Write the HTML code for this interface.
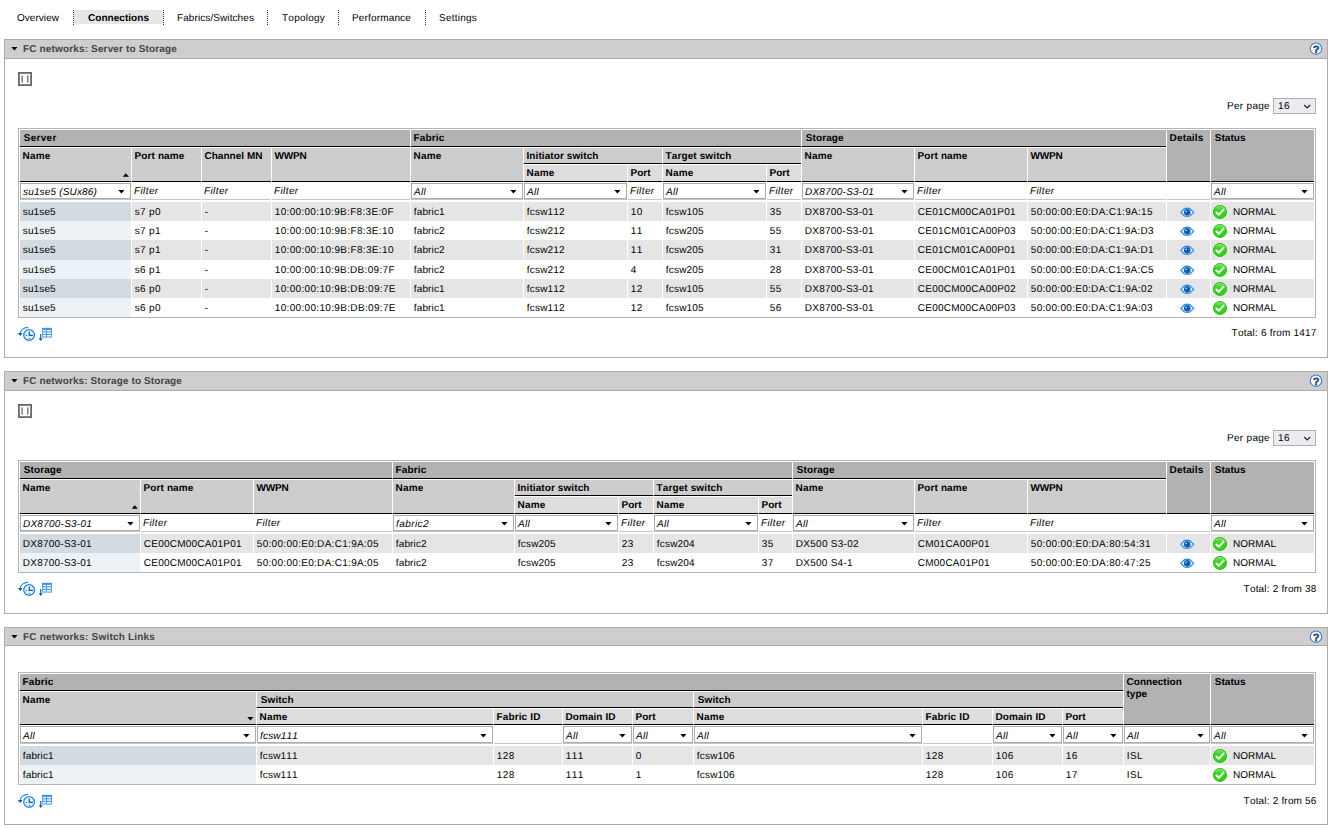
<!DOCTYPE html>
<html><head><meta charset="utf-8"><title>FC networks</title>
<style>
html,body{margin:0;padding:0;background:#fff}
body{text-rendering:geometricPrecision;width:1332px;height:828px;position:relative;overflow:hidden;font-family:"Liberation Sans",Arial,sans-serif;font-size:10px;color:#000}
.r{position:absolute;display:block}
.t{position:absolute;white-space:nowrap;font-kerning:none;font-variant-ligatures:none;line-height:12px;height:12px;font-size:10px}
.b{font-weight:bold}
.i{font-style:italic}
.ttl{color:#444}
.panel{position:absolute;border:1px solid #ababab;background:#fff}
.tb{position:absolute;border:1px solid #b4b4b4;background:#fff}
.sel{position:absolute;border:1px solid #adadad;background:#fff}
.pp{position:absolute;border:1px solid #b0b0b0;background:#ebebf0}
.dot{width:0;border-left:1px dotted #333}
</style></head>
<body>
<div class="r" style="left:74px;top:10px;width:89px;height:14px;background:#e6e6e6;"></div>
<div class="r dot" style="left:73px;top:10px;height:15px"></div>
<div class="r dot" style="left:163px;top:10px;height:15px"></div>
<div class="r dot" style="left:267px;top:10px;height:15px"></div>
<div class="r dot" style="left:338px;top:10px;height:15px"></div>
<div class="r dot" style="left:425px;top:10px;height:15px"></div>
<div class="t " style="left:17px;top:13px;letter-spacing:0.041px;">Overview</div>
<div class="t b" style="left:88px;top:13px;letter-spacing:0.04px;">Connections</div>
<div class="t " style="left:177px;top:13px;letter-spacing:0.089px;">Fabrics/Switches</div>
<div class="t " style="left:282px;top:13px;letter-spacing:0.233px;">Topology</div>
<div class="t " style="left:352px;top:13px;letter-spacing:0.159px;">Performance</div>
<div class="t " style="left:439px;top:13px;letter-spacing:0.233px;">Settings</div>
<div class="panel" style="left:4px;top:39px;width:1322px;height:317px"></div>
<div class="r" style="left:5px;top:40px;width:1322px;height:18px;background:#cecece;"></div>
<div class="r" style="left:5px;top:58px;width:1322px;height:1px;background:#ababab;"></div>
<svg class="r" style="left:10.6px;top:47px" width="8" height="5" viewBox="0 0 8 5"><path d="M0.3 0h6.2L3.4 3.5z" fill="#000"/></svg>
<div class="t b ttl" style="left:23px;top:44px;letter-spacing:0.151px;">FC networks: Server to Storage</div>
<svg class="r" style="left:1309px;top:42px" width="14" height="14" viewBox="0 0 14 14"><circle cx="7" cy="6.7" r="5.7" fill="#fff" stroke="#3f7dba" stroke-width="1.1"/><text x="7.1" y="10.7" text-anchor="middle" font-family="Liberation Sans, sans-serif" font-weight="bold" font-size="10.5" fill="#0e4a86" stroke="#0e4a86" stroke-width="0.5">?</text></svg>
<svg class="r" style="left:18px;top:72px" width="14" height="14" viewBox="0 0 14 14"><rect x="0.9" y="0.9" width="12.2" height="12.2" fill="#fff" stroke="#686868" stroke-width="1.8"/><rect x="3.4" y="3.3" width="1.5" height="7.4" rx="0.6" fill="#7a7a7a"/><rect x="9" y="3.3" width="1.5" height="7.4" rx="0.6" fill="#7a7a7a"/></svg>
<div class="t " style="right:62px;top:101px;letter-spacing:0.302px;">Per page</div>
<div class="pp" style="left:1273px;top:98px;width:41px;height:14px"></div>
<div class="t " style="left:1278px;top:101px;letter-spacing:0.438px;">16</div>
<svg class="r" style="left:1303px;top:104px" width="9" height="6" viewBox="0 0 9 6"><path d="M1.2 1L4.2 4L7.2 1" fill="none" stroke="#222" stroke-width="1.1"/></svg>
<div class="tb" style="left:18px;top:128px;width:1296px;height:188px"></div>
<div class="r" style="left:20px;top:199px;width:1294px;height:1px;background:#c6c6c6;"></div>
<div class="r" style="left:131px;top:199px;width:1px;height:1px;background:#fff;"></div>
<div class="r" style="left:201px;top:199px;width:1px;height:1px;background:#fff;"></div>
<div class="r" style="left:271px;top:199px;width:1px;height:1px;background:#fff;"></div>
<div class="r" style="left:410px;top:199px;width:1px;height:1px;background:#fff;"></div>
<div class="r" style="left:523px;top:199px;width:1px;height:1px;background:#fff;"></div>
<div class="r" style="left:627px;top:199px;width:1px;height:1px;background:#fff;"></div>
<div class="r" style="left:662px;top:199px;width:1px;height:1px;background:#fff;"></div>
<div class="r" style="left:766px;top:199px;width:1px;height:1px;background:#fff;"></div>
<div class="r" style="left:801px;top:199px;width:1px;height:1px;background:#fff;"></div>
<div class="r" style="left:914px;top:199px;width:1px;height:1px;background:#fff;"></div>
<div class="r" style="left:1027px;top:199px;width:1px;height:1px;background:#fff;"></div>
<div class="r" style="left:1166px;top:199px;width:1px;height:1px;background:#fff;"></div>
<div class="r" style="left:1210px;top:199px;width:1px;height:1px;background:#fff;"></div>
<div class="r" style="left:20px;top:130px;width:390px;height:16px;background:#b2b2b2;"></div>
<div class="r" style="left:20px;top:146px;width:390px;height:1px;background:#000;"></div>
<div class="r" style="left:19px;top:146px;width:1px;height:1px;background:#c4c4c4;"></div>
<div class="t b" style="left:23.7px;top:133px;letter-spacing:0.31px;">Server</div>
<div class="r" style="left:411px;top:130px;width:390px;height:16px;background:#b2b2b2;"></div>
<div class="r" style="left:411px;top:146px;width:390px;height:1px;background:#000;"></div>
<div class="r" style="left:410px;top:146px;width:1px;height:1px;background:#c4c4c4;"></div>
<div class="t b" style="left:413.5px;top:133px;letter-spacing:0.165px;">Fabric</div>
<div class="r" style="left:802px;top:130px;width:364px;height:16px;background:#b2b2b2;"></div>
<div class="r" style="left:802px;top:146px;width:364px;height:1px;background:#000;"></div>
<div class="r" style="left:801px;top:146px;width:1px;height:1px;background:#c4c4c4;"></div>
<div class="t b" style="left:805.7px;top:133px;letter-spacing:0.11px;">Storage</div>
<div class="r" style="left:1167px;top:130px;width:43px;height:51px;background:#b2b2b2;"></div>
<div class="r" style="left:1167px;top:181px;width:43px;height:1px;background:#000;"></div>
<div class="r" style="left:1166px;top:181px;width:1px;height:1px;background:#c4c4c4;"></div>
<div class="t b" style="left:1169.5px;top:133px;letter-spacing:0.172px;">Details</div>
<div class="r" style="left:1211px;top:130px;width:103px;height:51px;background:#b2b2b2;"></div>
<div class="r" style="left:1211px;top:181px;width:103px;height:1px;background:#000;"></div>
<div class="r" style="left:1210px;top:181px;width:1px;height:1px;background:#c4c4c4;"></div>
<div class="t b" style="left:1214.7px;top:133px;letter-spacing:0.073px;">Status</div>
<div class="r" style="left:20px;top:148px;width:111px;height:33px;background:#cdcdcd;"></div>
<div class="r" style="left:20px;top:181px;width:111px;height:1px;background:#000;"></div>
<div class="r" style="left:19px;top:181px;width:1px;height:1px;background:#c4c4c4;"></div>
<div class="t b" style="left:22.5px;top:151px;letter-spacing:0.191px;">Name</div>
<div class="r" style="left:132px;top:148px;width:69px;height:33px;background:#cdcdcd;"></div>
<div class="r" style="left:132px;top:181px;width:69px;height:1px;background:#000;"></div>
<div class="r" style="left:131px;top:181px;width:1px;height:1px;background:#c4c4c4;"></div>
<div class="t b" style="left:134.5px;top:151px;letter-spacing:0.122px;">Port name</div>
<div class="r" style="left:202px;top:148px;width:69px;height:33px;background:#cdcdcd;"></div>
<div class="r" style="left:202px;top:181px;width:69px;height:1px;background:#000;"></div>
<div class="r" style="left:201px;top:181px;width:1px;height:1px;background:#c4c4c4;"></div>
<div class="t b" style="left:204.5px;top:151px;letter-spacing:0.022px;">Channel MN</div>
<div class="r" style="left:272px;top:148px;width:138px;height:33px;background:#cdcdcd;"></div>
<div class="r" style="left:272px;top:181px;width:138px;height:1px;background:#000;"></div>
<div class="r" style="left:271px;top:181px;width:1px;height:1px;background:#c4c4c4;"></div>
<div class="t b" style="left:274.5px;top:151px;letter-spacing:-0.192px;">WWPN</div>
<div class="r" style="left:411px;top:148px;width:112px;height:33px;background:#cdcdcd;"></div>
<div class="r" style="left:411px;top:181px;width:112px;height:1px;background:#000;"></div>
<div class="r" style="left:410px;top:181px;width:1px;height:1px;background:#c4c4c4;"></div>
<div class="t b" style="left:413.5px;top:151px;letter-spacing:0.191px;">Name</div>
<div class="r" style="left:802px;top:148px;width:112px;height:33px;background:#cdcdcd;"></div>
<div class="r" style="left:802px;top:181px;width:112px;height:1px;background:#000;"></div>
<div class="r" style="left:801px;top:181px;width:1px;height:1px;background:#c4c4c4;"></div>
<div class="t b" style="left:804.5px;top:151px;letter-spacing:0.191px;">Name</div>
<div class="r" style="left:915px;top:148px;width:112px;height:33px;background:#cdcdcd;"></div>
<div class="r" style="left:915px;top:181px;width:112px;height:1px;background:#000;"></div>
<div class="r" style="left:914px;top:181px;width:1px;height:1px;background:#c4c4c4;"></div>
<div class="t b" style="left:917.5px;top:151px;letter-spacing:0.122px;">Port name</div>
<div class="r" style="left:1028px;top:148px;width:138px;height:33px;background:#cdcdcd;"></div>
<div class="r" style="left:1028px;top:181px;width:138px;height:1px;background:#000;"></div>
<div class="r" style="left:1027px;top:181px;width:1px;height:1px;background:#c4c4c4;"></div>
<div class="t b" style="left:1030.5px;top:151px;letter-spacing:-0.192px;">WWPN</div>
<div class="r" style="left:524px;top:148px;width:138px;height:15px;background:#cdcdcd;"></div>
<div class="r" style="left:524px;top:163px;width:138px;height:1px;background:#000;"></div>
<div class="r" style="left:523px;top:163px;width:1px;height:1px;background:#c4c4c4;"></div>
<div class="t b" style="left:526.5px;top:151px;letter-spacing:0.09px;">Initiator switch</div>
<div class="r" style="left:663px;top:148px;width:138px;height:15px;background:#cdcdcd;"></div>
<div class="r" style="left:663px;top:163px;width:138px;height:1px;background:#000;"></div>
<div class="r" style="left:662px;top:163px;width:1px;height:1px;background:#c4c4c4;"></div>
<div class="t b" style="left:665.5px;top:151px;letter-spacing:0.119px;">Target switch</div>
<div class="r" style="left:524px;top:165px;width:103px;height:16px;background:#dddddd;"></div>
<div class="r" style="left:524px;top:181px;width:103px;height:1px;background:#000;"></div>
<div class="r" style="left:523px;top:181px;width:1px;height:1px;background:#c4c4c4;"></div>
<div class="t b" style="left:526.5px;top:168px;letter-spacing:0.191px;">Name</div>
<div class="r" style="left:628px;top:165px;width:34px;height:16px;background:#dddddd;"></div>
<div class="r" style="left:628px;top:181px;width:34px;height:1px;background:#000;"></div>
<div class="r" style="left:627px;top:181px;width:1px;height:1px;background:#c4c4c4;"></div>
<div class="t b" style="left:630.5px;top:168px;letter-spacing:0.0px;">Port</div>
<div class="r" style="left:663px;top:165px;width:103px;height:16px;background:#dddddd;"></div>
<div class="r" style="left:663px;top:181px;width:103px;height:1px;background:#000;"></div>
<div class="r" style="left:662px;top:181px;width:1px;height:1px;background:#c4c4c4;"></div>
<div class="t b" style="left:665.5px;top:168px;letter-spacing:0.191px;">Name</div>
<div class="r" style="left:767px;top:165px;width:34px;height:16px;background:#dddddd;"></div>
<div class="r" style="left:767px;top:181px;width:34px;height:1px;background:#000;"></div>
<div class="r" style="left:766px;top:181px;width:1px;height:1px;background:#c4c4c4;"></div>
<div class="t b" style="left:769.5px;top:168px;letter-spacing:0.0px;">Port</div>
<svg class="r" style="left:122px;top:173px" width="8" height="5" viewBox="0 0 8 5"><path d="M0.7 3.7h6.2L3.8 0.2z" fill="#000"/></svg>
<div class="sel" style="left:20px;top:183px;width:109px;height:14px"></div>
<div class="t i" style="left:23px;top:187px;letter-spacing:0.164px;">su1se5 (SUx86)</div>
<svg class="r" style="left:118.4px;top:190px" width="8" height="5" viewBox="0 0 8 5"><path d="M0.3 0h6.2L3.4 3.5z" fill="#000"/></svg>
<div class="t i" style="left:134px;top:186px;letter-spacing:0.396px;">Filter</div>
<div class="t i" style="left:204px;top:186px;letter-spacing:0.396px;">Filter</div>
<div class="t i" style="left:274px;top:186px;letter-spacing:0.396px;">Filter</div>
<div class="sel" style="left:411px;top:183px;width:110px;height:14px"></div>
<div class="t i" style="left:414px;top:187px;letter-spacing:0.362px;">All</div>
<svg class="r" style="left:510.4px;top:190px" width="8" height="5" viewBox="0 0 8 5"><path d="M0.3 0h6.2L3.4 3.5z" fill="#000"/></svg>
<div class="sel" style="left:524px;top:183px;width:101px;height:14px"></div>
<div class="t i" style="left:527px;top:187px;letter-spacing:0.362px;">All</div>
<svg class="r" style="left:614.4px;top:190px" width="8" height="5" viewBox="0 0 8 5"><path d="M0.3 0h6.2L3.4 3.5z" fill="#000"/></svg>
<div class="t i" style="left:630px;top:186px;letter-spacing:0.396px;">Filter</div>
<div class="sel" style="left:663px;top:183px;width:101px;height:14px"></div>
<div class="t i" style="left:666px;top:187px;letter-spacing:0.362px;">All</div>
<svg class="r" style="left:753.4px;top:190px" width="8" height="5" viewBox="0 0 8 5"><path d="M0.3 0h6.2L3.4 3.5z" fill="#000"/></svg>
<div class="t i" style="left:769px;top:186px;letter-spacing:0.396px;">Filter</div>
<div class="sel" style="left:802px;top:183px;width:110px;height:14px"></div>
<div class="t i" style="left:805px;top:187px;letter-spacing:0.237px;">DX8700-S3-01</div>
<svg class="r" style="left:901.4px;top:190px" width="8" height="5" viewBox="0 0 8 5"><path d="M0.3 0h6.2L3.4 3.5z" fill="#000"/></svg>
<div class="t i" style="left:917px;top:186px;letter-spacing:0.396px;">Filter</div>
<div class="t i" style="left:1030px;top:186px;letter-spacing:0.396px;">Filter</div>
<div class="sel" style="left:1211px;top:183px;width:101px;height:14px"></div>
<div class="t i" style="left:1214px;top:187px;letter-spacing:0.362px;">All</div>
<svg class="r" style="left:1301.4px;top:190px" width="8" height="5" viewBox="0 0 8 5"><path d="M0.3 0h6.2L3.4 3.5z" fill="#000"/></svg>
<div class="r" style="left:20px;top:202px;width:111px;height:19px;background:#d2dae2;"></div>
<div class="t " style="left:22.8px;top:207px;letter-spacing:0.126px;">su1se5</div>
<div class="r" style="left:132px;top:202px;width:69px;height:19px;background:#e5e5e5;"></div>
<div class="t " style="left:134.8px;top:207px;letter-spacing:0.307px;">s7 p0</div>
<div class="r" style="left:202px;top:202px;width:69px;height:19px;background:#e5e5e5;"></div>
<div class="t " style="left:204.8px;top:207px;letter-spacing:-0.33px;">-</div>
<div class="r" style="left:272px;top:202px;width:138px;height:19px;background:#e5e5e5;"></div>
<div class="t " style="left:274.8px;top:207px;letter-spacing:0.316px;">10:00:00:10:9B:F8:3E:0F</div>
<div class="r" style="left:411px;top:202px;width:112px;height:19px;background:#e5e5e5;"></div>
<div class="t " style="left:413.8px;top:207px;letter-spacing:0.141px;">fabric1</div>
<div class="r" style="left:524px;top:202px;width:103px;height:19px;background:#e5e5e5;"></div>
<div class="t " style="left:526.8px;top:207px;letter-spacing:0.188px;">fcsw112</div>
<div class="r" style="left:628px;top:202px;width:34px;height:19px;background:#e5e5e5;"></div>
<div class="t " style="left:630.8px;top:207px;letter-spacing:0.438px;">10</div>
<div class="r" style="left:663px;top:202px;width:103px;height:19px;background:#e5e5e5;"></div>
<div class="t " style="left:665.8px;top:207px;letter-spacing:0.188px;">fcsw105</div>
<div class="r" style="left:767px;top:202px;width:34px;height:19px;background:#e5e5e5;"></div>
<div class="t " style="left:769.8px;top:207px;letter-spacing:0.438px;">35</div>
<div class="r" style="left:802px;top:202px;width:112px;height:19px;background:#e5e5e5;"></div>
<div class="t " style="left:804.8px;top:207px;letter-spacing:0.237px;">DX8700-S3-01</div>
<div class="r" style="left:915px;top:202px;width:112px;height:19px;background:#e5e5e5;"></div>
<div class="t " style="left:917.8px;top:207px;letter-spacing:0.234px;">CE01CM00CA01P01</div>
<div class="r" style="left:1028px;top:202px;width:138px;height:19px;background:#e5e5e5;"></div>
<div class="t " style="left:1030.8px;top:207px;letter-spacing:0.301px;">50:00:00:E0:DA:C1:9A:15</div>
<div class="r" style="left:1167px;top:202px;width:43px;height:19px;background:#e5e5e5;"></div>
<svg class="r" style="left:1179.4px;top:207.3px" width="16" height="11" viewBox="0 0 16 11"><path d="M1.8 5.35L5.4 1.7Q8.1 0.8 10.8 1.7L14.7 5.35L10.8 9Q8.1 9.9 5.4 9z" fill="#fff" stroke="#2b8de6" stroke-width="1.3" stroke-linejoin="round"/><circle cx="8.2" cy="5.35" r="3.35" fill="#1565b8"/><circle cx="8.4" cy="5.6" r="1.8" fill="#0f55a0"/><circle cx="7.2" cy="4.5" r="0.75" fill="#e4f1ff"/></svg>
<div class="r" style="left:1211px;top:202px;width:103px;height:19px;background:#e5e5e5;"></div>
<svg class="r" style="left:1213px;top:205px" width="15" height="15" viewBox="0 0 15 15"><defs><linearGradient id="g167" x1="0" y1="0" x2="0" y2="1"><stop offset="0" stop-color="#86ec76"/><stop offset="0.38" stop-color="#3ad61e"/><stop offset="1" stop-color="#2ad40c"/></linearGradient></defs><circle cx="7" cy="6.9" r="6.6" fill="url(#g167)" stroke="#24ad14" stroke-width="0.8"/><path d="M3.4 7.6L5.8 9.7L10.6 4.6" fill="none" stroke="#fff" stroke-width="2" stroke-linecap="round" stroke-linejoin="round"/></svg>
<div class="t " style="left:1233px;top:207px;letter-spacing:0.036px;">NORMAL</div>
<div class="r" style="left:20px;top:221px;width:111px;height:19px;background:#edf2f7;"></div>
<div class="t " style="left:22.8px;top:226px;letter-spacing:0.126px;">su1se5</div>
<div class="r" style="left:132px;top:221px;width:69px;height:19px;background:#ffffff;"></div>
<div class="t " style="left:134.8px;top:226px;letter-spacing:0.307px;">s7 p1</div>
<div class="r" style="left:202px;top:221px;width:69px;height:19px;background:#ffffff;"></div>
<div class="t " style="left:204.8px;top:226px;letter-spacing:-0.33px;">-</div>
<div class="r" style="left:272px;top:221px;width:138px;height:19px;background:#ffffff;"></div>
<div class="t " style="left:274.8px;top:226px;letter-spacing:0.339px;">10:00:00:10:9B:F8:3E:10</div>
<div class="r" style="left:411px;top:221px;width:112px;height:19px;background:#ffffff;"></div>
<div class="t " style="left:413.8px;top:226px;letter-spacing:0.141px;">fabric2</div>
<div class="r" style="left:524px;top:221px;width:103px;height:19px;background:#ffffff;"></div>
<div class="t " style="left:526.8px;top:226px;letter-spacing:0.188px;">fcsw212</div>
<div class="r" style="left:628px;top:221px;width:34px;height:19px;background:#ffffff;"></div>
<div class="t " style="left:630.8px;top:226px;letter-spacing:0.438px;">11</div>
<div class="r" style="left:663px;top:221px;width:103px;height:19px;background:#ffffff;"></div>
<div class="t " style="left:665.8px;top:226px;letter-spacing:0.188px;">fcsw205</div>
<div class="r" style="left:767px;top:221px;width:34px;height:19px;background:#ffffff;"></div>
<div class="t " style="left:769.8px;top:226px;letter-spacing:0.438px;">55</div>
<div class="r" style="left:802px;top:221px;width:112px;height:19px;background:#ffffff;"></div>
<div class="t " style="left:804.8px;top:226px;letter-spacing:0.237px;">DX8700-S3-01</div>
<div class="r" style="left:915px;top:221px;width:112px;height:19px;background:#ffffff;"></div>
<div class="t " style="left:917.8px;top:226px;letter-spacing:0.234px;">CE01CM01CA00P03</div>
<div class="r" style="left:1028px;top:221px;width:138px;height:19px;background:#ffffff;"></div>
<div class="t " style="left:1030.8px;top:226px;letter-spacing:0.272px;">50:00:00:E0:DA:C1:9A:D3</div>
<div class="r" style="left:1167px;top:221px;width:43px;height:19px;background:#ffffff;"></div>
<svg class="r" style="left:1179.4px;top:226.3px" width="16" height="11" viewBox="0 0 16 11"><path d="M1.8 5.35L5.4 1.7Q8.1 0.8 10.8 1.7L14.7 5.35L10.8 9Q8.1 9.9 5.4 9z" fill="#fff" stroke="#2b8de6" stroke-width="1.3" stroke-linejoin="round"/><circle cx="8.2" cy="5.35" r="3.35" fill="#1565b8"/><circle cx="8.4" cy="5.6" r="1.8" fill="#0f55a0"/><circle cx="7.2" cy="4.5" r="0.75" fill="#e4f1ff"/></svg>
<div class="r" style="left:1211px;top:221px;width:103px;height:19px;background:#ffffff;"></div>
<svg class="r" style="left:1213px;top:224px" width="15" height="15" viewBox="0 0 15 15"><defs><linearGradient id="g196" x1="0" y1="0" x2="0" y2="1"><stop offset="0" stop-color="#86ec76"/><stop offset="0.38" stop-color="#3ad61e"/><stop offset="1" stop-color="#2ad40c"/></linearGradient></defs><circle cx="7" cy="6.9" r="6.6" fill="url(#g196)" stroke="#24ad14" stroke-width="0.8"/><path d="M3.4 7.6L5.8 9.7L10.6 4.6" fill="none" stroke="#fff" stroke-width="2" stroke-linecap="round" stroke-linejoin="round"/></svg>
<div class="t " style="left:1233px;top:226px;letter-spacing:0.036px;">NORMAL</div>
<div class="r" style="left:20px;top:240px;width:111px;height:20px;background:#d2dae2;"></div>
<div class="t " style="left:22.8px;top:245px;letter-spacing:0.126px;">su1se5</div>
<div class="r" style="left:132px;top:240px;width:69px;height:20px;background:#e5e5e5;"></div>
<div class="t " style="left:134.8px;top:245px;letter-spacing:0.307px;">s7 p1</div>
<div class="r" style="left:202px;top:240px;width:69px;height:20px;background:#e5e5e5;"></div>
<div class="t " style="left:204.8px;top:245px;letter-spacing:-0.33px;">-</div>
<div class="r" style="left:272px;top:240px;width:138px;height:20px;background:#e5e5e5;"></div>
<div class="t " style="left:274.8px;top:245px;letter-spacing:0.339px;">10:00:00:10:9B:F8:3E:10</div>
<div class="r" style="left:411px;top:240px;width:112px;height:20px;background:#e5e5e5;"></div>
<div class="t " style="left:413.8px;top:245px;letter-spacing:0.141px;">fabric2</div>
<div class="r" style="left:524px;top:240px;width:103px;height:20px;background:#e5e5e5;"></div>
<div class="t " style="left:526.8px;top:245px;letter-spacing:0.188px;">fcsw212</div>
<div class="r" style="left:628px;top:240px;width:34px;height:20px;background:#e5e5e5;"></div>
<div class="t " style="left:630.8px;top:245px;letter-spacing:0.438px;">11</div>
<div class="r" style="left:663px;top:240px;width:103px;height:20px;background:#e5e5e5;"></div>
<div class="t " style="left:665.8px;top:245px;letter-spacing:0.188px;">fcsw205</div>
<div class="r" style="left:767px;top:240px;width:34px;height:20px;background:#e5e5e5;"></div>
<div class="t " style="left:769.8px;top:245px;letter-spacing:0.438px;">31</div>
<div class="r" style="left:802px;top:240px;width:112px;height:20px;background:#e5e5e5;"></div>
<div class="t " style="left:804.8px;top:245px;letter-spacing:0.237px;">DX8700-S3-01</div>
<div class="r" style="left:915px;top:240px;width:112px;height:20px;background:#e5e5e5;"></div>
<div class="t " style="left:917.8px;top:245px;letter-spacing:0.234px;">CE01CM01CA00P01</div>
<div class="r" style="left:1028px;top:240px;width:138px;height:20px;background:#e5e5e5;"></div>
<div class="t " style="left:1030.8px;top:245px;letter-spacing:0.272px;">50:00:00:E0:DA:C1:9A:D1</div>
<div class="r" style="left:1167px;top:240px;width:43px;height:20px;background:#e5e5e5;"></div>
<svg class="r" style="left:1179.4px;top:245.3px" width="16" height="11" viewBox="0 0 16 11"><path d="M1.8 5.35L5.4 1.7Q8.1 0.8 10.8 1.7L14.7 5.35L10.8 9Q8.1 9.9 5.4 9z" fill="#fff" stroke="#2b8de6" stroke-width="1.3" stroke-linejoin="round"/><circle cx="8.2" cy="5.35" r="3.35" fill="#1565b8"/><circle cx="8.4" cy="5.6" r="1.8" fill="#0f55a0"/><circle cx="7.2" cy="4.5" r="0.75" fill="#e4f1ff"/></svg>
<div class="r" style="left:1211px;top:240px;width:103px;height:20px;background:#e5e5e5;"></div>
<svg class="r" style="left:1213px;top:243px" width="15" height="15" viewBox="0 0 15 15"><defs><linearGradient id="g225" x1="0" y1="0" x2="0" y2="1"><stop offset="0" stop-color="#86ec76"/><stop offset="0.38" stop-color="#3ad61e"/><stop offset="1" stop-color="#2ad40c"/></linearGradient></defs><circle cx="7" cy="6.9" r="6.6" fill="url(#g225)" stroke="#24ad14" stroke-width="0.8"/><path d="M3.4 7.6L5.8 9.7L10.6 4.6" fill="none" stroke="#fff" stroke-width="2" stroke-linecap="round" stroke-linejoin="round"/></svg>
<div class="t " style="left:1233px;top:245px;letter-spacing:0.036px;">NORMAL</div>
<div class="r" style="left:20px;top:260px;width:111px;height:19px;background:#edf2f7;"></div>
<div class="t " style="left:22.8px;top:265px;letter-spacing:0.126px;">su1se5</div>
<div class="r" style="left:132px;top:260px;width:69px;height:19px;background:#ffffff;"></div>
<div class="t " style="left:134.8px;top:265px;letter-spacing:0.307px;">s6 p1</div>
<div class="r" style="left:202px;top:260px;width:69px;height:19px;background:#ffffff;"></div>
<div class="t " style="left:204.8px;top:265px;letter-spacing:-0.33px;">-</div>
<div class="r" style="left:272px;top:260px;width:138px;height:19px;background:#ffffff;"></div>
<div class="t " style="left:274.8px;top:265px;letter-spacing:0.311px;">10:00:00:10:9B:DB:09:7F</div>
<div class="r" style="left:411px;top:260px;width:112px;height:19px;background:#ffffff;"></div>
<div class="t " style="left:413.8px;top:265px;letter-spacing:0.141px;">fabric2</div>
<div class="r" style="left:524px;top:260px;width:103px;height:19px;background:#ffffff;"></div>
<div class="t " style="left:526.8px;top:265px;letter-spacing:0.188px;">fcsw212</div>
<div class="r" style="left:628px;top:260px;width:34px;height:19px;background:#ffffff;"></div>
<div class="t " style="left:630.8px;top:265px;letter-spacing:0.438px;">4</div>
<div class="r" style="left:663px;top:260px;width:103px;height:19px;background:#ffffff;"></div>
<div class="t " style="left:665.8px;top:265px;letter-spacing:0.188px;">fcsw205</div>
<div class="r" style="left:767px;top:260px;width:34px;height:19px;background:#ffffff;"></div>
<div class="t " style="left:769.8px;top:265px;letter-spacing:0.438px;">28</div>
<div class="r" style="left:802px;top:260px;width:112px;height:19px;background:#ffffff;"></div>
<div class="t " style="left:804.8px;top:265px;letter-spacing:0.237px;">DX8700-S3-01</div>
<div class="r" style="left:915px;top:260px;width:112px;height:19px;background:#ffffff;"></div>
<div class="t " style="left:917.8px;top:265px;letter-spacing:0.234px;">CE00CM01CA01P01</div>
<div class="r" style="left:1028px;top:260px;width:138px;height:19px;background:#ffffff;"></div>
<div class="t " style="left:1030.8px;top:265px;letter-spacing:0.272px;">50:00:00:E0:DA:C1:9A:C5</div>
<div class="r" style="left:1167px;top:260px;width:43px;height:19px;background:#ffffff;"></div>
<svg class="r" style="left:1179.4px;top:265.3px" width="16" height="11" viewBox="0 0 16 11"><path d="M1.8 5.35L5.4 1.7Q8.1 0.8 10.8 1.7L14.7 5.35L10.8 9Q8.1 9.9 5.4 9z" fill="#fff" stroke="#2b8de6" stroke-width="1.3" stroke-linejoin="round"/><circle cx="8.2" cy="5.35" r="3.35" fill="#1565b8"/><circle cx="8.4" cy="5.6" r="1.8" fill="#0f55a0"/><circle cx="7.2" cy="4.5" r="0.75" fill="#e4f1ff"/></svg>
<div class="r" style="left:1211px;top:260px;width:103px;height:19px;background:#ffffff;"></div>
<svg class="r" style="left:1213px;top:263px" width="15" height="15" viewBox="0 0 15 15"><defs><linearGradient id="g254" x1="0" y1="0" x2="0" y2="1"><stop offset="0" stop-color="#86ec76"/><stop offset="0.38" stop-color="#3ad61e"/><stop offset="1" stop-color="#2ad40c"/></linearGradient></defs><circle cx="7" cy="6.9" r="6.6" fill="url(#g254)" stroke="#24ad14" stroke-width="0.8"/><path d="M3.4 7.6L5.8 9.7L10.6 4.6" fill="none" stroke="#fff" stroke-width="2" stroke-linecap="round" stroke-linejoin="round"/></svg>
<div class="t " style="left:1233px;top:265px;letter-spacing:0.036px;">NORMAL</div>
<div class="r" style="left:20px;top:279px;width:111px;height:19px;background:#d2dae2;"></div>
<div class="t " style="left:22.8px;top:284px;letter-spacing:0.126px;">su1se5</div>
<div class="r" style="left:132px;top:279px;width:69px;height:19px;background:#e5e5e5;"></div>
<div class="t " style="left:134.8px;top:284px;letter-spacing:0.307px;">s6 p0</div>
<div class="r" style="left:202px;top:279px;width:69px;height:19px;background:#e5e5e5;"></div>
<div class="t " style="left:204.8px;top:284px;letter-spacing:-0.33px;">-</div>
<div class="r" style="left:272px;top:279px;width:138px;height:19px;background:#e5e5e5;"></div>
<div class="t " style="left:274.8px;top:284px;letter-spacing:0.33px;">10:00:00:10:9B:DB:09:7E</div>
<div class="r" style="left:411px;top:279px;width:112px;height:19px;background:#e5e5e5;"></div>
<div class="t " style="left:413.8px;top:284px;letter-spacing:0.141px;">fabric1</div>
<div class="r" style="left:524px;top:279px;width:103px;height:19px;background:#e5e5e5;"></div>
<div class="t " style="left:526.8px;top:284px;letter-spacing:0.188px;">fcsw112</div>
<div class="r" style="left:628px;top:279px;width:34px;height:19px;background:#e5e5e5;"></div>
<div class="t " style="left:630.8px;top:284px;letter-spacing:0.438px;">12</div>
<div class="r" style="left:663px;top:279px;width:103px;height:19px;background:#e5e5e5;"></div>
<div class="t " style="left:665.8px;top:284px;letter-spacing:0.188px;">fcsw105</div>
<div class="r" style="left:767px;top:279px;width:34px;height:19px;background:#e5e5e5;"></div>
<div class="t " style="left:769.8px;top:284px;letter-spacing:0.438px;">55</div>
<div class="r" style="left:802px;top:279px;width:112px;height:19px;background:#e5e5e5;"></div>
<div class="t " style="left:804.8px;top:284px;letter-spacing:0.237px;">DX8700-S3-01</div>
<div class="r" style="left:915px;top:279px;width:112px;height:19px;background:#e5e5e5;"></div>
<div class="t " style="left:917.8px;top:284px;letter-spacing:0.234px;">CE00CM00CA00P02</div>
<div class="r" style="left:1028px;top:279px;width:138px;height:19px;background:#e5e5e5;"></div>
<div class="t " style="left:1030.8px;top:284px;letter-spacing:0.301px;">50:00:00:E0:DA:C1:9A:02</div>
<div class="r" style="left:1167px;top:279px;width:43px;height:19px;background:#e5e5e5;"></div>
<svg class="r" style="left:1179.4px;top:284.3px" width="16" height="11" viewBox="0 0 16 11"><path d="M1.8 5.35L5.4 1.7Q8.1 0.8 10.8 1.7L14.7 5.35L10.8 9Q8.1 9.9 5.4 9z" fill="#fff" stroke="#2b8de6" stroke-width="1.3" stroke-linejoin="round"/><circle cx="8.2" cy="5.35" r="3.35" fill="#1565b8"/><circle cx="8.4" cy="5.6" r="1.8" fill="#0f55a0"/><circle cx="7.2" cy="4.5" r="0.75" fill="#e4f1ff"/></svg>
<div class="r" style="left:1211px;top:279px;width:103px;height:19px;background:#e5e5e5;"></div>
<svg class="r" style="left:1213px;top:282px" width="15" height="15" viewBox="0 0 15 15"><defs><linearGradient id="g283" x1="0" y1="0" x2="0" y2="1"><stop offset="0" stop-color="#86ec76"/><stop offset="0.38" stop-color="#3ad61e"/><stop offset="1" stop-color="#2ad40c"/></linearGradient></defs><circle cx="7" cy="6.9" r="6.6" fill="url(#g283)" stroke="#24ad14" stroke-width="0.8"/><path d="M3.4 7.6L5.8 9.7L10.6 4.6" fill="none" stroke="#fff" stroke-width="2" stroke-linecap="round" stroke-linejoin="round"/></svg>
<div class="t " style="left:1233px;top:284px;letter-spacing:0.036px;">NORMAL</div>
<div class="r" style="left:20px;top:298px;width:111px;height:19px;background:#edf2f7;"></div>
<div class="t " style="left:22.8px;top:303px;letter-spacing:0.126px;">su1se5</div>
<div class="r" style="left:132px;top:298px;width:69px;height:19px;background:#ffffff;"></div>
<div class="t " style="left:134.8px;top:303px;letter-spacing:0.307px;">s6 p0</div>
<div class="r" style="left:202px;top:298px;width:69px;height:19px;background:#ffffff;"></div>
<div class="t " style="left:204.8px;top:303px;letter-spacing:-0.33px;">-</div>
<div class="r" style="left:272px;top:298px;width:138px;height:19px;background:#ffffff;"></div>
<div class="t " style="left:274.8px;top:303px;letter-spacing:0.33px;">10:00:00:10:9B:DB:09:7E</div>
<div class="r" style="left:411px;top:298px;width:112px;height:19px;background:#ffffff;"></div>
<div class="t " style="left:413.8px;top:303px;letter-spacing:0.141px;">fabric1</div>
<div class="r" style="left:524px;top:298px;width:103px;height:19px;background:#ffffff;"></div>
<div class="t " style="left:526.8px;top:303px;letter-spacing:0.188px;">fcsw112</div>
<div class="r" style="left:628px;top:298px;width:34px;height:19px;background:#ffffff;"></div>
<div class="t " style="left:630.8px;top:303px;letter-spacing:0.438px;">12</div>
<div class="r" style="left:663px;top:298px;width:103px;height:19px;background:#ffffff;"></div>
<div class="t " style="left:665.8px;top:303px;letter-spacing:0.188px;">fcsw105</div>
<div class="r" style="left:767px;top:298px;width:34px;height:19px;background:#ffffff;"></div>
<div class="t " style="left:769.8px;top:303px;letter-spacing:0.438px;">56</div>
<div class="r" style="left:802px;top:298px;width:112px;height:19px;background:#ffffff;"></div>
<div class="t " style="left:804.8px;top:303px;letter-spacing:0.237px;">DX8700-S3-01</div>
<div class="r" style="left:915px;top:298px;width:112px;height:19px;background:#ffffff;"></div>
<div class="t " style="left:917.8px;top:303px;letter-spacing:0.234px;">CE00CM00CA00P03</div>
<div class="r" style="left:1028px;top:298px;width:138px;height:19px;background:#ffffff;"></div>
<div class="t " style="left:1030.8px;top:303px;letter-spacing:0.301px;">50:00:00:E0:DA:C1:9A:03</div>
<div class="r" style="left:1167px;top:298px;width:43px;height:19px;background:#ffffff;"></div>
<svg class="r" style="left:1179.4px;top:303.3px" width="16" height="11" viewBox="0 0 16 11"><path d="M1.8 5.35L5.4 1.7Q8.1 0.8 10.8 1.7L14.7 5.35L10.8 9Q8.1 9.9 5.4 9z" fill="#fff" stroke="#2b8de6" stroke-width="1.3" stroke-linejoin="round"/><circle cx="8.2" cy="5.35" r="3.35" fill="#1565b8"/><circle cx="8.4" cy="5.6" r="1.8" fill="#0f55a0"/><circle cx="7.2" cy="4.5" r="0.75" fill="#e4f1ff"/></svg>
<div class="r" style="left:1211px;top:298px;width:103px;height:19px;background:#ffffff;"></div>
<svg class="r" style="left:1213px;top:301px" width="15" height="15" viewBox="0 0 15 15"><defs><linearGradient id="g312" x1="0" y1="0" x2="0" y2="1"><stop offset="0" stop-color="#86ec76"/><stop offset="0.38" stop-color="#3ad61e"/><stop offset="1" stop-color="#2ad40c"/></linearGradient></defs><circle cx="7" cy="6.9" r="6.6" fill="url(#g312)" stroke="#24ad14" stroke-width="0.8"/><path d="M3.4 7.6L5.8 9.7L10.6 4.6" fill="none" stroke="#fff" stroke-width="2" stroke-linecap="round" stroke-linejoin="round"/></svg>
<div class="t " style="left:1233px;top:303px;letter-spacing:0.036px;">NORMAL</div>
<svg class="r" style="left:17px;top:326px" width="20" height="17" viewBox="0 0 20 17"><path d="M11.2 1.4C6.6 1.3 3.5 4 3.2 7.2" fill="none" stroke="#2b8de6" stroke-width="1.1"/><path d="M0.8 6.9h4.7L3.3 9.9z" fill="#0c5aa8"/><circle cx="12.1" cy="9" r="5.4" fill="#e6f1fc" stroke="#2088e8" stroke-width="1.3"/><path d="M12.3 5.6V9.4H15.9" fill="none" stroke="#0c5aa8" stroke-width="1.2"/><rect x="8.6" y="8.9" width="1.1" height="1" fill="#0c5aa8"/><rect x="11.8" y="12" width="1" height="1.1" fill="#0c5aa8"/></svg>
<svg class="r" style="left:38px;top:327px" width="15" height="15" viewBox="0 0 15 15"><rect x="4.1" y="0.9" width="9.8" height="9.7" fill="#4a9fec"/><rect x="4.1" y="0.9" width="9.8" height="1.7" fill="#3a92e6"/><g fill="#fff"><rect x="5.1" y="2.9" width="2.9" height="1.3"/><rect x="9" y="2.9" width="3.9" height="1.3"/><rect x="5.1" y="5.4" width="2.9" height="1.4"/><rect x="9" y="5.4" width="3.9" height="1.4"/><rect x="5.1" y="8" width="2.9" height="1.5"/><rect x="9" y="8" width="3.9" height="1.5"/></g><path d="M2.7 7v5" stroke="#0c5aa8" stroke-width="1.1"/><path d="M0.7 11.3h4L2.7 14.1z" fill="#0c5aa8"/></svg>
<div class="t " style="right:15.400000000000091px;top:328px;letter-spacing:0.214px;">Total: 6 from 1417</div>
<div class="panel" style="left:4px;top:371px;width:1322px;height:241px"></div>
<div class="r" style="left:5px;top:372px;width:1322px;height:18px;background:#cecece;"></div>
<div class="r" style="left:5px;top:390px;width:1322px;height:1px;background:#ababab;"></div>
<svg class="r" style="left:10.6px;top:379px" width="8" height="5" viewBox="0 0 8 5"><path d="M0.3 0h6.2L3.4 3.5z" fill="#000"/></svg>
<div class="t b ttl" style="left:23px;top:376px;letter-spacing:0.11px;">FC networks: Storage to Storage</div>
<svg class="r" style="left:1309px;top:374px" width="14" height="14" viewBox="0 0 14 14"><circle cx="7" cy="6.7" r="5.7" fill="#fff" stroke="#3f7dba" stroke-width="1.1"/><text x="7.1" y="10.7" text-anchor="middle" font-family="Liberation Sans, sans-serif" font-weight="bold" font-size="10.5" fill="#0e4a86" stroke="#0e4a86" stroke-width="0.5">?</text></svg>
<svg class="r" style="left:18px;top:404px" width="14" height="14" viewBox="0 0 14 14"><rect x="0.9" y="0.9" width="12.2" height="12.2" fill="#fff" stroke="#686868" stroke-width="1.8"/><rect x="3.4" y="3.3" width="1.5" height="7.4" rx="0.6" fill="#7a7a7a"/><rect x="9" y="3.3" width="1.5" height="7.4" rx="0.6" fill="#7a7a7a"/></svg>
<div class="t " style="right:62px;top:433px;letter-spacing:0.302px;">Per page</div>
<div class="pp" style="left:1273px;top:430px;width:41px;height:14px"></div>
<div class="t " style="left:1278px;top:433px;letter-spacing:0.438px;">16</div>
<svg class="r" style="left:1303px;top:436px" width="9" height="6" viewBox="0 0 9 6"><path d="M1.2 1L4.2 4L7.2 1" fill="none" stroke="#222" stroke-width="1.1"/></svg>
<div class="tb" style="left:18px;top:460px;width:1296px;height:111px"></div>
<div class="r" style="left:20px;top:531px;width:1294px;height:1px;background:#c6c6c6;"></div>
<div class="r" style="left:140px;top:531px;width:1px;height:1px;background:#fff;"></div>
<div class="r" style="left:253px;top:531px;width:1px;height:1px;background:#fff;"></div>
<div class="r" style="left:392px;top:531px;width:1px;height:1px;background:#fff;"></div>
<div class="r" style="left:514px;top:531px;width:1px;height:1px;background:#fff;"></div>
<div class="r" style="left:618px;top:531px;width:1px;height:1px;background:#fff;"></div>
<div class="r" style="left:653px;top:531px;width:1px;height:1px;background:#fff;"></div>
<div class="r" style="left:758px;top:531px;width:1px;height:1px;background:#fff;"></div>
<div class="r" style="left:792px;top:531px;width:1px;height:1px;background:#fff;"></div>
<div class="r" style="left:914px;top:531px;width:1px;height:1px;background:#fff;"></div>
<div class="r" style="left:1027px;top:531px;width:1px;height:1px;background:#fff;"></div>
<div class="r" style="left:1166px;top:531px;width:1px;height:1px;background:#fff;"></div>
<div class="r" style="left:1210px;top:531px;width:1px;height:1px;background:#fff;"></div>
<div class="r" style="left:20px;top:462px;width:372px;height:16px;background:#b2b2b2;"></div>
<div class="r" style="left:20px;top:478px;width:372px;height:1px;background:#000;"></div>
<div class="r" style="left:19px;top:478px;width:1px;height:1px;background:#c4c4c4;"></div>
<div class="t b" style="left:23.7px;top:465px;letter-spacing:0.11px;">Storage</div>
<div class="r" style="left:393px;top:462px;width:399px;height:16px;background:#b2b2b2;"></div>
<div class="r" style="left:393px;top:478px;width:399px;height:1px;background:#000;"></div>
<div class="r" style="left:392px;top:478px;width:1px;height:1px;background:#c4c4c4;"></div>
<div class="t b" style="left:395.5px;top:465px;letter-spacing:0.165px;">Fabric</div>
<div class="r" style="left:793px;top:462px;width:373px;height:16px;background:#b2b2b2;"></div>
<div class="r" style="left:793px;top:478px;width:373px;height:1px;background:#000;"></div>
<div class="r" style="left:792px;top:478px;width:1px;height:1px;background:#c4c4c4;"></div>
<div class="t b" style="left:796.7px;top:465px;letter-spacing:0.11px;">Storage</div>
<div class="r" style="left:1167px;top:462px;width:43px;height:51px;background:#b2b2b2;"></div>
<div class="r" style="left:1167px;top:513px;width:43px;height:1px;background:#000;"></div>
<div class="r" style="left:1166px;top:513px;width:1px;height:1px;background:#c4c4c4;"></div>
<div class="t b" style="left:1169.5px;top:465px;letter-spacing:0.172px;">Details</div>
<div class="r" style="left:1211px;top:462px;width:103px;height:51px;background:#b2b2b2;"></div>
<div class="r" style="left:1211px;top:513px;width:103px;height:1px;background:#000;"></div>
<div class="r" style="left:1210px;top:513px;width:1px;height:1px;background:#c4c4c4;"></div>
<div class="t b" style="left:1214.7px;top:465px;letter-spacing:0.073px;">Status</div>
<div class="r" style="left:20px;top:480px;width:120px;height:33px;background:#cdcdcd;"></div>
<div class="r" style="left:20px;top:513px;width:120px;height:1px;background:#000;"></div>
<div class="r" style="left:19px;top:513px;width:1px;height:1px;background:#c4c4c4;"></div>
<div class="t b" style="left:22.5px;top:483px;letter-spacing:0.191px;">Name</div>
<div class="r" style="left:141px;top:480px;width:112px;height:33px;background:#cdcdcd;"></div>
<div class="r" style="left:141px;top:513px;width:112px;height:1px;background:#000;"></div>
<div class="r" style="left:140px;top:513px;width:1px;height:1px;background:#c4c4c4;"></div>
<div class="t b" style="left:143.5px;top:483px;letter-spacing:0.122px;">Port name</div>
<div class="r" style="left:254px;top:480px;width:138px;height:33px;background:#cdcdcd;"></div>
<div class="r" style="left:254px;top:513px;width:138px;height:1px;background:#000;"></div>
<div class="r" style="left:253px;top:513px;width:1px;height:1px;background:#c4c4c4;"></div>
<div class="t b" style="left:256.5px;top:483px;letter-spacing:-0.192px;">WWPN</div>
<div class="r" style="left:393px;top:480px;width:121px;height:33px;background:#cdcdcd;"></div>
<div class="r" style="left:393px;top:513px;width:121px;height:1px;background:#000;"></div>
<div class="r" style="left:392px;top:513px;width:1px;height:1px;background:#c4c4c4;"></div>
<div class="t b" style="left:395.5px;top:483px;letter-spacing:0.191px;">Name</div>
<div class="r" style="left:793px;top:480px;width:121px;height:33px;background:#cdcdcd;"></div>
<div class="r" style="left:793px;top:513px;width:121px;height:1px;background:#000;"></div>
<div class="r" style="left:792px;top:513px;width:1px;height:1px;background:#c4c4c4;"></div>
<div class="t b" style="left:795.5px;top:483px;letter-spacing:0.191px;">Name</div>
<div class="r" style="left:915px;top:480px;width:112px;height:33px;background:#cdcdcd;"></div>
<div class="r" style="left:915px;top:513px;width:112px;height:1px;background:#000;"></div>
<div class="r" style="left:914px;top:513px;width:1px;height:1px;background:#c4c4c4;"></div>
<div class="t b" style="left:917.5px;top:483px;letter-spacing:0.122px;">Port name</div>
<div class="r" style="left:1028px;top:480px;width:138px;height:33px;background:#cdcdcd;"></div>
<div class="r" style="left:1028px;top:513px;width:138px;height:1px;background:#000;"></div>
<div class="r" style="left:1027px;top:513px;width:1px;height:1px;background:#c4c4c4;"></div>
<div class="t b" style="left:1030.5px;top:483px;letter-spacing:-0.192px;">WWPN</div>
<div class="r" style="left:515px;top:480px;width:138px;height:15px;background:#cdcdcd;"></div>
<div class="r" style="left:515px;top:495px;width:138px;height:1px;background:#000;"></div>
<div class="r" style="left:514px;top:495px;width:1px;height:1px;background:#c4c4c4;"></div>
<div class="t b" style="left:517.5px;top:483px;letter-spacing:0.09px;">Initiator switch</div>
<div class="r" style="left:654px;top:480px;width:138px;height:15px;background:#cdcdcd;"></div>
<div class="r" style="left:654px;top:495px;width:138px;height:1px;background:#000;"></div>
<div class="r" style="left:653px;top:495px;width:1px;height:1px;background:#c4c4c4;"></div>
<div class="t b" style="left:656.5px;top:483px;letter-spacing:0.119px;">Target switch</div>
<div class="r" style="left:515px;top:497px;width:103px;height:16px;background:#dddddd;"></div>
<div class="r" style="left:515px;top:513px;width:103px;height:1px;background:#000;"></div>
<div class="r" style="left:514px;top:513px;width:1px;height:1px;background:#c4c4c4;"></div>
<div class="t b" style="left:517.5px;top:500px;letter-spacing:0.191px;">Name</div>
<div class="r" style="left:619px;top:497px;width:34px;height:16px;background:#dddddd;"></div>
<div class="r" style="left:619px;top:513px;width:34px;height:1px;background:#000;"></div>
<div class="r" style="left:618px;top:513px;width:1px;height:1px;background:#c4c4c4;"></div>
<div class="t b" style="left:621.5px;top:500px;letter-spacing:0.0px;">Port</div>
<div class="r" style="left:654px;top:497px;width:104px;height:16px;background:#dddddd;"></div>
<div class="r" style="left:654px;top:513px;width:104px;height:1px;background:#000;"></div>
<div class="r" style="left:653px;top:513px;width:1px;height:1px;background:#c4c4c4;"></div>
<div class="t b" style="left:656.5px;top:500px;letter-spacing:0.191px;">Name</div>
<div class="r" style="left:759px;top:497px;width:33px;height:16px;background:#dddddd;"></div>
<div class="r" style="left:759px;top:513px;width:33px;height:1px;background:#000;"></div>
<div class="r" style="left:758px;top:513px;width:1px;height:1px;background:#c4c4c4;"></div>
<div class="t b" style="left:761.5px;top:500px;letter-spacing:0.0px;">Port</div>
<svg class="r" style="left:131px;top:505px" width="8" height="5" viewBox="0 0 8 5"><path d="M0.7 3.7h6.2L3.8 0.2z" fill="#000"/></svg>
<div class="sel" style="left:20px;top:515px;width:118px;height:14px"></div>
<div class="t i" style="left:23px;top:519px;letter-spacing:0.237px;">DX8700-S3-01</div>
<svg class="r" style="left:127.4px;top:522px" width="8" height="5" viewBox="0 0 8 5"><path d="M0.3 0h6.2L3.4 3.5z" fill="#000"/></svg>
<div class="t i" style="left:143px;top:518px;letter-spacing:0.396px;">Filter</div>
<div class="t i" style="left:256px;top:518px;letter-spacing:0.396px;">Filter</div>
<div class="sel" style="left:393px;top:515px;width:119px;height:14px"></div>
<div class="t i" style="left:396px;top:519px;letter-spacing:0.426px;">fabric2</div>
<svg class="r" style="left:501.4px;top:522px" width="8" height="5" viewBox="0 0 8 5"><path d="M0.3 0h6.2L3.4 3.5z" fill="#000"/></svg>
<div class="sel" style="left:515px;top:515px;width:101px;height:14px"></div>
<div class="t i" style="left:518px;top:519px;letter-spacing:0.362px;">All</div>
<svg class="r" style="left:605.4px;top:522px" width="8" height="5" viewBox="0 0 8 5"><path d="M0.3 0h6.2L3.4 3.5z" fill="#000"/></svg>
<div class="t i" style="left:621px;top:518px;letter-spacing:0.396px;">Filter</div>
<div class="sel" style="left:654px;top:515px;width:102px;height:14px"></div>
<div class="t i" style="left:657px;top:519px;letter-spacing:0.362px;">All</div>
<svg class="r" style="left:745.4px;top:522px" width="8" height="5" viewBox="0 0 8 5"><path d="M0.3 0h6.2L3.4 3.5z" fill="#000"/></svg>
<div class="t i" style="left:761px;top:518px;letter-spacing:0.396px;">Filter</div>
<div class="sel" style="left:793px;top:515px;width:119px;height:14px"></div>
<div class="t i" style="left:796px;top:519px;letter-spacing:0.362px;">All</div>
<svg class="r" style="left:901.4px;top:522px" width="8" height="5" viewBox="0 0 8 5"><path d="M0.3 0h6.2L3.4 3.5z" fill="#000"/></svg>
<div class="t i" style="left:917px;top:518px;letter-spacing:0.396px;">Filter</div>
<div class="t i" style="left:1030px;top:518px;letter-spacing:0.396px;">Filter</div>
<div class="sel" style="left:1211px;top:515px;width:101px;height:14px"></div>
<div class="t i" style="left:1214px;top:519px;letter-spacing:0.362px;">All</div>
<svg class="r" style="left:1301.4px;top:522px" width="8" height="5" viewBox="0 0 8 5"><path d="M0.3 0h6.2L3.4 3.5z" fill="#000"/></svg>
<div class="r" style="left:20px;top:534px;width:120px;height:19px;background:#d2dae2;"></div>
<div class="t " style="left:22.8px;top:539px;letter-spacing:0.237px;">DX8700-S3-01</div>
<div class="r" style="left:141px;top:534px;width:112px;height:19px;background:#e5e5e5;"></div>
<div class="t " style="left:143.8px;top:539px;letter-spacing:0.234px;">CE00CM00CA01P01</div>
<div class="r" style="left:254px;top:534px;width:138px;height:19px;background:#e5e5e5;"></div>
<div class="t " style="left:256.8px;top:539px;letter-spacing:0.301px;">50:00:00:E0:DA:C1:9A:05</div>
<div class="r" style="left:393px;top:534px;width:121px;height:19px;background:#e5e5e5;"></div>
<div class="t " style="left:395.8px;top:539px;letter-spacing:0.141px;">fabric2</div>
<div class="r" style="left:515px;top:534px;width:103px;height:19px;background:#e5e5e5;"></div>
<div class="t " style="left:517.8px;top:539px;letter-spacing:0.188px;">fcsw205</div>
<div class="r" style="left:619px;top:534px;width:34px;height:19px;background:#e5e5e5;"></div>
<div class="t " style="left:621.8px;top:539px;letter-spacing:0.438px;">23</div>
<div class="r" style="left:654px;top:534px;width:104px;height:19px;background:#e5e5e5;"></div>
<div class="t " style="left:656.8px;top:539px;letter-spacing:0.188px;">fcsw204</div>
<div class="r" style="left:759px;top:534px;width:33px;height:19px;background:#e5e5e5;"></div>
<div class="t " style="left:761.8px;top:539px;letter-spacing:0.438px;">35</div>
<div class="r" style="left:793px;top:534px;width:121px;height:19px;background:#e5e5e5;"></div>
<div class="t " style="left:795.8px;top:539px;letter-spacing:0.269px;">DX500 S3-02</div>
<div class="r" style="left:915px;top:534px;width:112px;height:19px;background:#e5e5e5;"></div>
<div class="t " style="left:917.8px;top:539px;letter-spacing:0.229px;">CM01CA00P01</div>
<div class="r" style="left:1028px;top:534px;width:138px;height:19px;background:#e5e5e5;"></div>
<div class="t " style="left:1030.8px;top:539px;letter-spacing:0.334px;">50:00:00:E0:DA:80:54:31</div>
<div class="r" style="left:1167px;top:534px;width:43px;height:19px;background:#e5e5e5;"></div>
<svg class="r" style="left:1179.4px;top:539.3px" width="16" height="11" viewBox="0 0 16 11"><path d="M1.8 5.35L5.4 1.7Q8.1 0.8 10.8 1.7L14.7 5.35L10.8 9Q8.1 9.9 5.4 9z" fill="#fff" stroke="#2b8de6" stroke-width="1.3" stroke-linejoin="round"/><circle cx="8.2" cy="5.35" r="3.35" fill="#1565b8"/><circle cx="8.4" cy="5.6" r="1.8" fill="#0f55a0"/><circle cx="7.2" cy="4.5" r="0.75" fill="#e4f1ff"/></svg>
<div class="r" style="left:1211px;top:534px;width:103px;height:19px;background:#e5e5e5;"></div>
<svg class="r" style="left:1213px;top:537px" width="15" height="15" viewBox="0 0 15 15"><defs><linearGradient id="g464" x1="0" y1="0" x2="0" y2="1"><stop offset="0" stop-color="#86ec76"/><stop offset="0.38" stop-color="#3ad61e"/><stop offset="1" stop-color="#2ad40c"/></linearGradient></defs><circle cx="7" cy="6.9" r="6.6" fill="url(#g464)" stroke="#24ad14" stroke-width="0.8"/><path d="M3.4 7.6L5.8 9.7L10.6 4.6" fill="none" stroke="#fff" stroke-width="2" stroke-linecap="round" stroke-linejoin="round"/></svg>
<div class="t " style="left:1233px;top:539px;letter-spacing:0.036px;">NORMAL</div>
<div class="r" style="left:20px;top:553px;width:120px;height:19px;background:#edf2f7;"></div>
<div class="t " style="left:22.8px;top:558px;letter-spacing:0.237px;">DX8700-S3-01</div>
<div class="r" style="left:141px;top:553px;width:112px;height:19px;background:#ffffff;"></div>
<div class="t " style="left:143.8px;top:558px;letter-spacing:0.234px;">CE00CM00CA01P01</div>
<div class="r" style="left:254px;top:553px;width:138px;height:19px;background:#ffffff;"></div>
<div class="t " style="left:256.8px;top:558px;letter-spacing:0.301px;">50:00:00:E0:DA:C1:9A:05</div>
<div class="r" style="left:393px;top:553px;width:121px;height:19px;background:#ffffff;"></div>
<div class="t " style="left:395.8px;top:558px;letter-spacing:0.141px;">fabric2</div>
<div class="r" style="left:515px;top:553px;width:103px;height:19px;background:#ffffff;"></div>
<div class="t " style="left:517.8px;top:558px;letter-spacing:0.188px;">fcsw205</div>
<div class="r" style="left:619px;top:553px;width:34px;height:19px;background:#ffffff;"></div>
<div class="t " style="left:621.8px;top:558px;letter-spacing:0.438px;">23</div>
<div class="r" style="left:654px;top:553px;width:104px;height:19px;background:#ffffff;"></div>
<div class="t " style="left:656.8px;top:558px;letter-spacing:0.188px;">fcsw204</div>
<div class="r" style="left:759px;top:553px;width:33px;height:19px;background:#ffffff;"></div>
<div class="t " style="left:761.8px;top:558px;letter-spacing:0.438px;">37</div>
<div class="r" style="left:793px;top:553px;width:121px;height:19px;background:#ffffff;"></div>
<div class="t " style="left:795.8px;top:558px;letter-spacing:0.252px;">DX500 S4-1</div>
<div class="r" style="left:915px;top:553px;width:112px;height:19px;background:#ffffff;"></div>
<div class="t " style="left:917.8px;top:558px;letter-spacing:0.229px;">CM00CA01P01</div>
<div class="r" style="left:1028px;top:553px;width:138px;height:19px;background:#ffffff;"></div>
<div class="t " style="left:1030.8px;top:558px;letter-spacing:0.334px;">50:00:00:E0:DA:80:47:25</div>
<div class="r" style="left:1167px;top:553px;width:43px;height:19px;background:#ffffff;"></div>
<svg class="r" style="left:1179.4px;top:558.3px" width="16" height="11" viewBox="0 0 16 11"><path d="M1.8 5.35L5.4 1.7Q8.1 0.8 10.8 1.7L14.7 5.35L10.8 9Q8.1 9.9 5.4 9z" fill="#fff" stroke="#2b8de6" stroke-width="1.3" stroke-linejoin="round"/><circle cx="8.2" cy="5.35" r="3.35" fill="#1565b8"/><circle cx="8.4" cy="5.6" r="1.8" fill="#0f55a0"/><circle cx="7.2" cy="4.5" r="0.75" fill="#e4f1ff"/></svg>
<div class="r" style="left:1211px;top:553px;width:103px;height:19px;background:#ffffff;"></div>
<svg class="r" style="left:1213px;top:556px" width="15" height="15" viewBox="0 0 15 15"><defs><linearGradient id="g491" x1="0" y1="0" x2="0" y2="1"><stop offset="0" stop-color="#86ec76"/><stop offset="0.38" stop-color="#3ad61e"/><stop offset="1" stop-color="#2ad40c"/></linearGradient></defs><circle cx="7" cy="6.9" r="6.6" fill="url(#g491)" stroke="#24ad14" stroke-width="0.8"/><path d="M3.4 7.6L5.8 9.7L10.6 4.6" fill="none" stroke="#fff" stroke-width="2" stroke-linecap="round" stroke-linejoin="round"/></svg>
<div class="t " style="left:1233px;top:558px;letter-spacing:0.036px;">NORMAL</div>
<svg class="r" style="left:17px;top:581px" width="20" height="17" viewBox="0 0 20 17"><path d="M11.2 1.4C6.6 1.3 3.5 4 3.2 7.2" fill="none" stroke="#2b8de6" stroke-width="1.1"/><path d="M0.8 6.9h4.7L3.3 9.9z" fill="#0c5aa8"/><circle cx="12.1" cy="9" r="5.4" fill="#e6f1fc" stroke="#2088e8" stroke-width="1.3"/><path d="M12.3 5.6V9.4H15.9" fill="none" stroke="#0c5aa8" stroke-width="1.2"/><rect x="8.6" y="8.9" width="1.1" height="1" fill="#0c5aa8"/><rect x="11.8" y="12" width="1" height="1.1" fill="#0c5aa8"/></svg>
<svg class="r" style="left:38px;top:582px" width="15" height="15" viewBox="0 0 15 15"><rect x="4.1" y="0.9" width="9.8" height="9.7" fill="#4a9fec"/><rect x="4.1" y="0.9" width="9.8" height="1.7" fill="#3a92e6"/><g fill="#fff"><rect x="5.1" y="2.9" width="2.9" height="1.3"/><rect x="9" y="2.9" width="3.9" height="1.3"/><rect x="5.1" y="5.4" width="2.9" height="1.4"/><rect x="9" y="5.4" width="3.9" height="1.4"/><rect x="5.1" y="8" width="2.9" height="1.5"/><rect x="9" y="8" width="3.9" height="1.5"/></g><path d="M2.7 7v5" stroke="#0c5aa8" stroke-width="1.1"/><path d="M0.7 11.3h4L2.7 14.1z" fill="#0c5aa8"/></svg>
<div class="t " style="right:15.400000000000091px;top:584px;letter-spacing:0.186px;">Total: 2 from 38</div>
<div class="panel" style="left:4px;top:627px;width:1322px;height:196px"></div>
<div class="r" style="left:5px;top:628px;width:1322px;height:17px;background:#cecece;"></div>
<div class="r" style="left:5px;top:645px;width:1322px;height:1px;background:#ababab;"></div>
<svg class="r" style="left:10.6px;top:635px" width="8" height="5" viewBox="0 0 8 5"><path d="M0.3 0h6.2L3.4 3.5z" fill="#000"/></svg>
<div class="t b ttl" style="left:23px;top:632px;letter-spacing:0.19px;">FC networks: Switch Links</div>
<svg class="r" style="left:1309px;top:630px" width="14" height="14" viewBox="0 0 14 14"><circle cx="7" cy="6.7" r="5.7" fill="#fff" stroke="#3f7dba" stroke-width="1.1"/><text x="7.1" y="10.7" text-anchor="middle" font-family="Liberation Sans, sans-serif" font-weight="bold" font-size="10.5" fill="#0e4a86" stroke="#0e4a86" stroke-width="0.5">?</text></svg>
<div class="tb" style="left:18px;top:672px;width:1296px;height:111px"></div>
<div class="r" style="left:20px;top:743px;width:1294px;height:1px;background:#c6c6c6;"></div>
<div class="r" style="left:256px;top:743px;width:1px;height:1px;background:#fff;"></div>
<div class="r" style="left:493px;top:743px;width:1px;height:1px;background:#fff;"></div>
<div class="r" style="left:562px;top:743px;width:1px;height:1px;background:#fff;"></div>
<div class="r" style="left:632px;top:743px;width:1px;height:1px;background:#fff;"></div>
<div class="r" style="left:693px;top:743px;width:1px;height:1px;background:#fff;"></div>
<div class="r" style="left:922px;top:743px;width:1px;height:1px;background:#fff;"></div>
<div class="r" style="left:992px;top:743px;width:1px;height:1px;background:#fff;"></div>
<div class="r" style="left:1062px;top:743px;width:1px;height:1px;background:#fff;"></div>
<div class="r" style="left:1123px;top:743px;width:1px;height:1px;background:#fff;"></div>
<div class="r" style="left:1210px;top:743px;width:1px;height:1px;background:#fff;"></div>
<div class="r" style="left:20px;top:674px;width:1103px;height:16px;background:#b2b2b2;"></div>
<div class="r" style="left:20px;top:690px;width:1103px;height:1px;background:#000;"></div>
<div class="r" style="left:19px;top:690px;width:1px;height:1px;background:#c4c4c4;"></div>
<div class="t b" style="left:22.5px;top:677px;letter-spacing:0.165px;">Fabric</div>
<div class="r" style="left:1124px;top:674px;width:86px;height:50px;background:#b2b2b2;"></div>
<div class="r" style="left:1124px;top:724px;width:86px;height:1px;background:#000;"></div>
<div class="r" style="left:1123px;top:724px;width:1px;height:1px;background:#c4c4c4;"></div>
<div class="t b" style="left:1126.5px;top:677px;letter-spacing:0.032px;">Connection<br>type</div>
<div class="r" style="left:1211px;top:674px;width:103px;height:50px;background:#b2b2b2;"></div>
<div class="r" style="left:1211px;top:724px;width:103px;height:1px;background:#000;"></div>
<div class="r" style="left:1210px;top:724px;width:1px;height:1px;background:#c4c4c4;"></div>
<div class="t b" style="left:1214.7px;top:677px;letter-spacing:0.073px;">Status</div>
<div class="r" style="left:20px;top:692px;width:236px;height:32px;background:#cdcdcd;"></div>
<div class="r" style="left:20px;top:724px;width:236px;height:1px;background:#000;"></div>
<div class="r" style="left:19px;top:724px;width:1px;height:1px;background:#c4c4c4;"></div>
<div class="t b" style="left:22.5px;top:695px;letter-spacing:0.191px;">Name</div>
<div class="r" style="left:257px;top:692px;width:436px;height:15px;background:#cdcdcd;"></div>
<div class="r" style="left:257px;top:707px;width:436px;height:1px;background:#000;"></div>
<div class="r" style="left:256px;top:707px;width:1px;height:1px;background:#c4c4c4;"></div>
<div class="t b" style="left:260.7px;top:695px;letter-spacing:0.129px;">Switch</div>
<div class="r" style="left:694px;top:692px;width:429px;height:15px;background:#cdcdcd;"></div>
<div class="r" style="left:694px;top:707px;width:429px;height:1px;background:#000;"></div>
<div class="r" style="left:693px;top:707px;width:1px;height:1px;background:#c4c4c4;"></div>
<div class="t b" style="left:697.7px;top:695px;letter-spacing:0.129px;">Switch</div>
<div class="r" style="left:257px;top:709px;width:236px;height:15px;background:#dddddd;"></div>
<div class="r" style="left:257px;top:724px;width:236px;height:1px;background:#000;"></div>
<div class="r" style="left:256px;top:724px;width:1px;height:1px;background:#c4c4c4;"></div>
<div class="t b" style="left:259.5px;top:712px;letter-spacing:0.191px;">Name</div>
<div class="r" style="left:494px;top:709px;width:68px;height:15px;background:#dddddd;"></div>
<div class="r" style="left:494px;top:724px;width:68px;height:1px;background:#000;"></div>
<div class="r" style="left:493px;top:724px;width:1px;height:1px;background:#c4c4c4;"></div>
<div class="t b" style="left:496.5px;top:712px;letter-spacing:0.135px;">Fabric ID</div>
<div class="r" style="left:563px;top:709px;width:69px;height:15px;background:#dddddd;"></div>
<div class="r" style="left:563px;top:724px;width:69px;height:1px;background:#000;"></div>
<div class="r" style="left:562px;top:724px;width:1px;height:1px;background:#c4c4c4;"></div>
<div class="t b" style="left:565.5px;top:712px;letter-spacing:0.061px;">Domain ID</div>
<div class="r" style="left:633px;top:709px;width:60px;height:15px;background:#dddddd;"></div>
<div class="r" style="left:633px;top:724px;width:60px;height:1px;background:#000;"></div>
<div class="r" style="left:632px;top:724px;width:1px;height:1px;background:#c4c4c4;"></div>
<div class="t b" style="left:635.5px;top:712px;letter-spacing:0.0px;">Port</div>
<div class="r" style="left:694px;top:709px;width:228px;height:15px;background:#dddddd;"></div>
<div class="r" style="left:694px;top:724px;width:228px;height:1px;background:#000;"></div>
<div class="r" style="left:693px;top:724px;width:1px;height:1px;background:#c4c4c4;"></div>
<div class="t b" style="left:696.5px;top:712px;letter-spacing:0.191px;">Name</div>
<div class="r" style="left:923px;top:709px;width:69px;height:15px;background:#dddddd;"></div>
<div class="r" style="left:923px;top:724px;width:69px;height:1px;background:#000;"></div>
<div class="r" style="left:922px;top:724px;width:1px;height:1px;background:#c4c4c4;"></div>
<div class="t b" style="left:925.5px;top:712px;letter-spacing:0.135px;">Fabric ID</div>
<div class="r" style="left:993px;top:709px;width:69px;height:15px;background:#dddddd;"></div>
<div class="r" style="left:993px;top:724px;width:69px;height:1px;background:#000;"></div>
<div class="r" style="left:992px;top:724px;width:1px;height:1px;background:#c4c4c4;"></div>
<div class="t b" style="left:995.5px;top:712px;letter-spacing:0.061px;">Domain ID</div>
<div class="r" style="left:1063px;top:709px;width:60px;height:15px;background:#dddddd;"></div>
<div class="r" style="left:1063px;top:724px;width:60px;height:1px;background:#000;"></div>
<div class="r" style="left:1062px;top:724px;width:1px;height:1px;background:#c4c4c4;"></div>
<div class="t b" style="left:1065.5px;top:712px;letter-spacing:0.0px;">Port</div>
<svg class="r" style="left:246.8px;top:717px" width="8" height="5" viewBox="0 0 8 5"><path d="M0.3 0h6.2L3.4 3.5z" fill="#000"/></svg>
<div class="sel" style="left:20px;top:726px;width:234px;height:15px"></div>
<div class="t i" style="left:23px;top:731px;letter-spacing:0.362px;">All</div>
<svg class="r" style="left:243.4px;top:734px" width="8" height="5" viewBox="0 0 8 5"><path d="M0.3 0h6.2L3.4 3.5z" fill="#000"/></svg>
<div class="sel" style="left:257px;top:726px;width:234px;height:15px"></div>
<div class="t i" style="left:260px;top:731px;letter-spacing:0.188px;">fcsw111</div>
<svg class="r" style="left:480.4px;top:734px" width="8" height="5" viewBox="0 0 8 5"><path d="M0.3 0h6.2L3.4 3.5z" fill="#000"/></svg>
<div class="sel" style="left:563px;top:726px;width:67px;height:15px"></div>
<div class="t i" style="left:566px;top:731px;letter-spacing:0.362px;">All</div>
<svg class="r" style="left:619.4px;top:734px" width="8" height="5" viewBox="0 0 8 5"><path d="M0.3 0h6.2L3.4 3.5z" fill="#000"/></svg>
<div class="sel" style="left:633px;top:726px;width:58px;height:15px"></div>
<div class="t i" style="left:636px;top:731px;letter-spacing:0.362px;">All</div>
<svg class="r" style="left:680.4px;top:734px" width="8" height="5" viewBox="0 0 8 5"><path d="M0.3 0h6.2L3.4 3.5z" fill="#000"/></svg>
<div class="sel" style="left:694px;top:726px;width:226px;height:15px"></div>
<div class="t i" style="left:697px;top:731px;letter-spacing:0.362px;">All</div>
<svg class="r" style="left:909.4px;top:734px" width="8" height="5" viewBox="0 0 8 5"><path d="M0.3 0h6.2L3.4 3.5z" fill="#000"/></svg>
<div class="sel" style="left:993px;top:726px;width:67px;height:15px"></div>
<div class="t i" style="left:996px;top:731px;letter-spacing:0.362px;">All</div>
<svg class="r" style="left:1049.4px;top:734px" width="8" height="5" viewBox="0 0 8 5"><path d="M0.3 0h6.2L3.4 3.5z" fill="#000"/></svg>
<div class="sel" style="left:1063px;top:726px;width:58px;height:15px"></div>
<div class="t i" style="left:1066px;top:731px;letter-spacing:0.362px;">All</div>
<svg class="r" style="left:1110.4px;top:734px" width="8" height="5" viewBox="0 0 8 5"><path d="M0.3 0h6.2L3.4 3.5z" fill="#000"/></svg>
<div class="sel" style="left:1124px;top:726px;width:84px;height:15px"></div>
<div class="t i" style="left:1127px;top:731px;letter-spacing:0.362px;">All</div>
<svg class="r" style="left:1197.4px;top:734px" width="8" height="5" viewBox="0 0 8 5"><path d="M0.3 0h6.2L3.4 3.5z" fill="#000"/></svg>
<div class="sel" style="left:1211px;top:726px;width:101px;height:15px"></div>
<div class="t i" style="left:1214px;top:731px;letter-spacing:0.362px;">All</div>
<svg class="r" style="left:1301.4px;top:734px" width="8" height="5" viewBox="0 0 8 5"><path d="M0.3 0h6.2L3.4 3.5z" fill="#000"/></svg>
<div class="r" style="left:20px;top:746px;width:236px;height:19px;background:#d2dae2;"></div>
<div class="t " style="left:22.8px;top:751px;letter-spacing:0.141px;">fabric1</div>
<div class="r" style="left:257px;top:746px;width:236px;height:19px;background:#e5e5e5;"></div>
<div class="t " style="left:259.8px;top:751px;letter-spacing:0.188px;">fcsw111</div>
<div class="r" style="left:494px;top:746px;width:68px;height:19px;background:#e5e5e5;"></div>
<div class="t " style="left:496.8px;top:751px;letter-spacing:0.438px;">128</div>
<div class="r" style="left:563px;top:746px;width:69px;height:19px;background:#e5e5e5;"></div>
<div class="t " style="left:565.8px;top:751px;letter-spacing:0.438px;">111</div>
<div class="r" style="left:633px;top:746px;width:60px;height:19px;background:#e5e5e5;"></div>
<div class="t " style="left:635.8px;top:751px;letter-spacing:0.438px;">0</div>
<div class="r" style="left:694px;top:746px;width:228px;height:19px;background:#e5e5e5;"></div>
<div class="t " style="left:696.8px;top:751px;letter-spacing:0.188px;">fcsw106</div>
<div class="r" style="left:923px;top:746px;width:69px;height:19px;background:#e5e5e5;"></div>
<div class="t " style="left:925.8px;top:751px;letter-spacing:0.438px;">128</div>
<div class="r" style="left:993px;top:746px;width:69px;height:19px;background:#e5e5e5;"></div>
<div class="t " style="left:995.8px;top:751px;letter-spacing:0.438px;">106</div>
<div class="r" style="left:1063px;top:746px;width:60px;height:19px;background:#e5e5e5;"></div>
<div class="t " style="left:1065.8px;top:751px;letter-spacing:0.438px;">16</div>
<div class="r" style="left:1124px;top:746px;width:86px;height:19px;background:#e5e5e5;"></div>
<div class="t " style="left:1126.8px;top:751px;letter-spacing:0.33px;">ISL</div>
<div class="r" style="left:1211px;top:746px;width:103px;height:19px;background:#e5e5e5;"></div>
<svg class="r" style="left:1213px;top:749px" width="15" height="15" viewBox="0 0 15 15"><defs><linearGradient id="g619" x1="0" y1="0" x2="0" y2="1"><stop offset="0" stop-color="#86ec76"/><stop offset="0.38" stop-color="#3ad61e"/><stop offset="1" stop-color="#2ad40c"/></linearGradient></defs><circle cx="7" cy="6.9" r="6.6" fill="url(#g619)" stroke="#24ad14" stroke-width="0.8"/><path d="M3.4 7.6L5.8 9.7L10.6 4.6" fill="none" stroke="#fff" stroke-width="2" stroke-linecap="round" stroke-linejoin="round"/></svg>
<div class="t " style="left:1233px;top:751px;letter-spacing:0.036px;">NORMAL</div>
<div class="r" style="left:20px;top:765px;width:236px;height:19px;background:#edf2f7;"></div>
<div class="t " style="left:22.8px;top:770px;letter-spacing:0.141px;">fabric1</div>
<div class="r" style="left:257px;top:765px;width:236px;height:19px;background:#ffffff;"></div>
<div class="t " style="left:259.8px;top:770px;letter-spacing:0.188px;">fcsw111</div>
<div class="r" style="left:494px;top:765px;width:68px;height:19px;background:#ffffff;"></div>
<div class="t " style="left:496.8px;top:770px;letter-spacing:0.438px;">128</div>
<div class="r" style="left:563px;top:765px;width:69px;height:19px;background:#ffffff;"></div>
<div class="t " style="left:565.8px;top:770px;letter-spacing:0.438px;">111</div>
<div class="r" style="left:633px;top:765px;width:60px;height:19px;background:#ffffff;"></div>
<div class="t " style="left:635.8px;top:770px;letter-spacing:0.438px;">1</div>
<div class="r" style="left:694px;top:765px;width:228px;height:19px;background:#ffffff;"></div>
<div class="t " style="left:696.8px;top:770px;letter-spacing:0.188px;">fcsw106</div>
<div class="r" style="left:923px;top:765px;width:69px;height:19px;background:#ffffff;"></div>
<div class="t " style="left:925.8px;top:770px;letter-spacing:0.438px;">128</div>
<div class="r" style="left:993px;top:765px;width:69px;height:19px;background:#ffffff;"></div>
<div class="t " style="left:995.8px;top:770px;letter-spacing:0.438px;">106</div>
<div class="r" style="left:1063px;top:765px;width:60px;height:19px;background:#ffffff;"></div>
<div class="t " style="left:1065.8px;top:770px;letter-spacing:0.438px;">17</div>
<div class="r" style="left:1124px;top:765px;width:86px;height:19px;background:#ffffff;"></div>
<div class="t " style="left:1126.8px;top:770px;letter-spacing:0.33px;">ISL</div>
<div class="r" style="left:1211px;top:765px;width:103px;height:19px;background:#ffffff;"></div>
<svg class="r" style="left:1213px;top:768px" width="15" height="15" viewBox="0 0 15 15"><defs><linearGradient id="g642" x1="0" y1="0" x2="0" y2="1"><stop offset="0" stop-color="#86ec76"/><stop offset="0.38" stop-color="#3ad61e"/><stop offset="1" stop-color="#2ad40c"/></linearGradient></defs><circle cx="7" cy="6.9" r="6.6" fill="url(#g642)" stroke="#24ad14" stroke-width="0.8"/><path d="M3.4 7.6L5.8 9.7L10.6 4.6" fill="none" stroke="#fff" stroke-width="2" stroke-linecap="round" stroke-linejoin="round"/></svg>
<div class="t " style="left:1233px;top:770px;letter-spacing:0.036px;">NORMAL</div>
<svg class="r" style="left:17px;top:793px" width="20" height="17" viewBox="0 0 20 17"><path d="M11.2 1.4C6.6 1.3 3.5 4 3.2 7.2" fill="none" stroke="#2b8de6" stroke-width="1.1"/><path d="M0.8 6.9h4.7L3.3 9.9z" fill="#0c5aa8"/><circle cx="12.1" cy="9" r="5.4" fill="#e6f1fc" stroke="#2088e8" stroke-width="1.3"/><path d="M12.3 5.6V9.4H15.9" fill="none" stroke="#0c5aa8" stroke-width="1.2"/><rect x="8.6" y="8.9" width="1.1" height="1" fill="#0c5aa8"/><rect x="11.8" y="12" width="1" height="1.1" fill="#0c5aa8"/></svg>
<svg class="r" style="left:38px;top:794px" width="15" height="15" viewBox="0 0 15 15"><rect x="4.1" y="0.9" width="9.8" height="9.7" fill="#4a9fec"/><rect x="4.1" y="0.9" width="9.8" height="1.7" fill="#3a92e6"/><g fill="#fff"><rect x="5.1" y="2.9" width="2.9" height="1.3"/><rect x="9" y="2.9" width="3.9" height="1.3"/><rect x="5.1" y="5.4" width="2.9" height="1.4"/><rect x="9" y="5.4" width="3.9" height="1.4"/><rect x="5.1" y="8" width="2.9" height="1.5"/><rect x="9" y="8" width="3.9" height="1.5"/></g><path d="M2.7 7v5" stroke="#0c5aa8" stroke-width="1.1"/><path d="M0.7 11.3h4L2.7 14.1z" fill="#0c5aa8"/></svg>
<div class="t " style="right:15.400000000000091px;top:796px;letter-spacing:0.186px;">Total: 2 from 56</div>
</body></html>
